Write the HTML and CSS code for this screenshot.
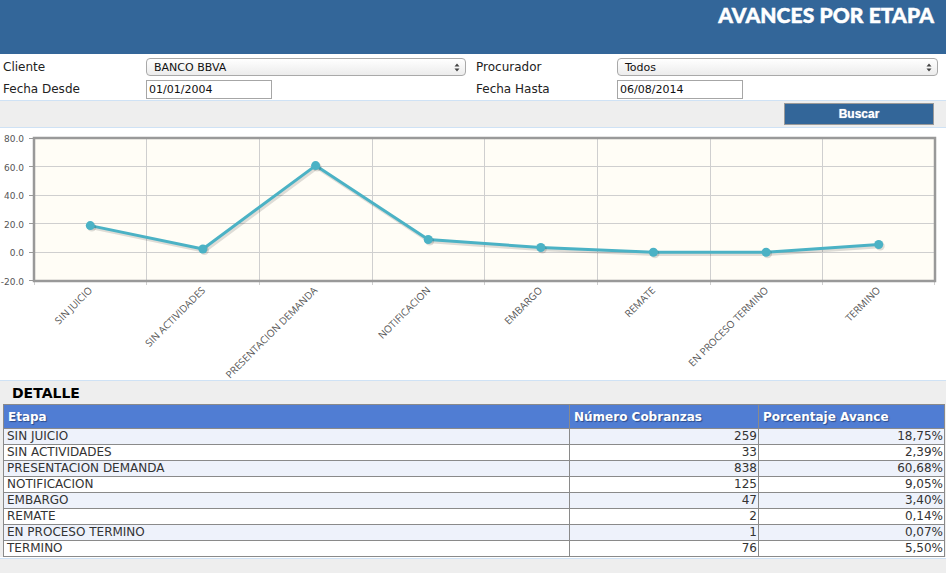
FILE: index.html
```html
<!DOCTYPE html>
<html lang="es">
<head>
<meta charset="utf-8">
<title>Avances por Etapa</title>
<link rel="stylesheet" href="styles.css">
</head>
<body>
<header class="topbar">
  <h1 class="title">AVANCES POR ETAPA</h1>
</header>

<form class="filters">
  <label class="lbl">Cliente</label>
  <div class="field"><div class="select"><span>BANCO BBVA</span><svg class="arrows" width="6" height="9" viewBox="0 0 6 9"><path d="M3 0.5 L5.5 3.5 L0.5 3.5 Z M3 8.5 L5.5 5.5 L0.5 5.5 Z" fill="#444"/></svg></div></div>
  <label class="lbl">Procurador</label>
  <div class="field"><div class="select wide"><span>Todos</span><svg class="arrows" width="6" height="9" viewBox="0 0 6 9"><path d="M3 0.5 L5.5 3.5 L0.5 3.5 Z M3 8.5 L5.5 5.5 L0.5 5.5 Z" fill="#444"/></svg></div></div>
  <label class="lbl">Fecha Desde</label>
  <div class="field"><input class="date" type="text" value="01/01/2004"></div>
  <label class="lbl">Fecha Hasta</label>
  <div class="field"><input class="date" type="text" value="06/08/2014"></div>
</form>

<div class="actions">
  <button class="btn" type="button">Buscar</button>
</div>

<section class="chart">
  <svg class="plot" width="946" height="252" viewBox="0 0 946 252">
    <rect x="34" y="10" width="901" height="143" fill="#fffdf6"/>
    <g stroke="#cfcfcf" stroke-width="1">
      <line x1="34" y1="38.5" x2="935" y2="38.5"/>
      <line x1="34" y1="67.5" x2="935" y2="67.5"/>
      <line x1="34" y1="95.5" x2="935" y2="95.5"/>
      <line x1="34" y1="124.5" x2="935" y2="124.5"/>
      <line x1="146.5" y1="10" x2="146.5" y2="157"/>
      <line x1="259.5" y1="10" x2="259.5" y2="157"/>
      <line x1="372.5" y1="10" x2="372.5" y2="157"/>
      <line x1="484.5" y1="10" x2="484.5" y2="157"/>
      <line x1="597.5" y1="10" x2="597.5" y2="157"/>
      <line x1="710.5" y1="10" x2="710.5" y2="157"/>
      <line x1="822.5" y1="10" x2="822.5" y2="157"/>
      <line x1="34.5" y1="153" x2="34.5" y2="157"/>
      <line x1="934.5" y1="153" x2="934.5" y2="157"/>
    </g>
    <g stroke="#999" stroke-width="1">
      <line x1="29" y1="10.5" x2="34" y2="10.5"/>
      <line x1="29" y1="38.5" x2="34" y2="38.5"/>
      <line x1="29" y1="67.5" x2="34" y2="67.5"/>
      <line x1="29" y1="95.5" x2="34" y2="95.5"/>
      <line x1="29" y1="124.5" x2="34" y2="124.5"/>
      <line x1="29" y1="152.5" x2="34" y2="152.5"/>
    </g>
    <rect x="34" y="10" width="901" height="143" fill="none" stroke="#999" stroke-width="2.5"/>
    <g class="ylab" text-anchor="end">
      <text x="24" y="14">80.0</text>
      <text x="24" y="42.5">60.0</text>
      <text x="24" y="71">40.0</text>
      <text x="24" y="99.5">20.0</text>
      <text x="24" y="128">0.0</text>
      <text x="24" y="156.5">-20.0</text>
    </g>
    <polyline points="91.8,99.6 204.4,123 317.1,39.6 429.7,113.5 542.3,121.5 654.9,126.2 767.6,126.3 880.2,118.5" fill="none" stroke="rgba(0,0,0,0.13)" stroke-width="3.5" stroke-linejoin="round"/>
    <polyline points="90.3,97.6 202.9,121 315.6,37.6 428.2,111.5 540.8,119.5 653.4,124.2 766.1,124.3 878.7,116.5" fill="none" stroke="#4bb2c5" stroke-width="3" stroke-linejoin="round"/>
    <g fill="rgba(0,0,0,0.13)">
      <circle cx="91.8" cy="99.1" r="4.5"/><circle cx="204.4" cy="122.5" r="4.5"/><circle cx="317.1" cy="39.1" r="4.5"/><circle cx="429.7" cy="113" r="4.5"/><circle cx="542.3" cy="121" r="4.5"/><circle cx="654.9" cy="125.7" r="4.5"/><circle cx="767.6" cy="125.8" r="4.5"/><circle cx="880.2" cy="118" r="4.5"/>
    </g>
    <g fill="#4bb2c5">
      <circle cx="90.3" cy="97.6" r="4.5"/><circle cx="202.9" cy="121" r="4.5"/><circle cx="315.6" cy="37.6" r="4.5"/><circle cx="428.2" cy="111.5" r="4.5"/><circle cx="540.8" cy="119.5" r="4.5"/><circle cx="653.4" cy="124.2" r="4.5"/><circle cx="766.1" cy="124.3" r="4.5"/><circle cx="878.7" cy="116.5" r="4.5"/>
    </g>
    <g class="xlab" text-anchor="end">
      <text transform="translate(93,163) rotate(-45)">SIN JUICIO</text>
      <text transform="translate(206,163) rotate(-45)">SIN ACTIVIDADES</text>
      <text transform="translate(318,163) rotate(-45)">PRESENTACION DEMANDA</text>
      <text transform="translate(431,163) rotate(-45)">NOTIFICACION</text>
      <text transform="translate(543,163) rotate(-45)">EMBARGO</text>
      <text transform="translate(656,163) rotate(-45)">REMATE</text>
      <text transform="translate(769,163) rotate(-45)">EN PROCESO TERMINO</text>
      <text transform="translate(881,163) rotate(-45)">TERMINO</text>
    </g>
  </svg>
</section>

<section class="detail">
  <h2 class="detail-title">DETALLE</h2>
  <table class="grid">
    <thead>
      <tr><th class="c1">Etapa</th><th class="c2">Número Cobranzas</th><th class="c3">Porcentaje Avance</th></tr>
    </thead>
    <tbody>
      <tr><td>SIN JUICIO</td><td class="num">259</td><td class="num">18,75%</td></tr>
      <tr><td>SIN ACTIVIDADES</td><td class="num">33</td><td class="num">2,39%</td></tr>
      <tr><td>PRESENTACION DEMANDA</td><td class="num">838</td><td class="num">60,68%</td></tr>
      <tr><td>NOTIFICACION</td><td class="num">125</td><td class="num">9,05%</td></tr>
      <tr><td>EMBARGO</td><td class="num">47</td><td class="num">3,40%</td></tr>
      <tr><td>REMATE</td><td class="num">2</td><td class="num">0,14%</td></tr>
      <tr><td>EN PROCESO TERMINO</td><td class="num">1</td><td class="num">0,07%</td></tr>
      <tr><td>TERMINO</td><td class="num">76</td><td class="num">5,50%</td></tr>
    </tbody>
  </table>
</section>

<div class="footer-bar"></div>
</body>
</html>
```

FILE: styles.css
```css
html, body {
  margin: 0;
  padding: 0;
  background: #ffffff;
}
body {
  width: 946px;
  height: 573px;
  overflow: hidden;
  font-family: "DejaVu Sans", Verdana, sans-serif;
  font-size: 12px;
  color: #222;
}

.topbar {
  height: 54px;
  background: #336699;
  display: flex;
  justify-content: flex-end;
  align-items: flex-start;
  padding-right: 12px;
}
.title {
  margin: 3px 0 0 0;
  font-family: "Lato", "Open Sans", sans-serif;
  font-weight: 900;
  font-size: 21px;
  letter-spacing: 0.1px;
  color: #ffffff;
  line-height: 24px;
  -webkit-text-stroke: 0.5px #ffffff;
}

.filters {
  display: grid;
  grid-template-columns: 143px 330px 141px 321px;
  grid-template-rows: 22px 22px;
  padding: 2px 0 0 3px;
  margin: 0;
  align-items: center;
}
.lbl {
  font-size: 12px;
  color: #222;
}
.field {
  display: flex;
  align-items: center;
}
.select {
  box-sizing: border-box;
  width: 320px;
  height: 18px;
  border: 1px solid #a9a9a9;
  border-radius: 4px;
  background: linear-gradient(#ffffff, #ececec);
  display: flex;
  align-items: center;
  justify-content: space-between;
  padding: 0 5px 0 7px;
  font-size: 11px;
  color: #111;
}
.select.wide {
  width: 321px;
}
.arrows {
  display: block;
}
.date {
  box-sizing: border-box;
  width: 126px;
  height: 19px;
  margin: 0;
  border: 1px solid #a6a6a6;
  padding: 0 0 0 2px;
  font-family: "DejaVu Sans", Verdana, sans-serif;
  font-size: 11px;
  color: #111;
  background: #fff;
}

.actions {
  box-sizing: border-box;
  height: 28px;
  background: #eeeeee;
  border-top: 1px solid #cfe2f5;
  border-bottom: 1px solid #cfe2f5;
  display: flex;
  justify-content: flex-end;
  align-items: center;
  padding-right: 12px;
}
.btn {
  width: 150px;
  height: 22px;
  background: #336699;
  border: 1px solid #9a9a9a;
  color: #fff;
  font-family: "Liberation Sans", Arial, sans-serif;
  font-weight: bold;
  font-size: 12px;
  text-shadow: 0 0 1px #ccd;
  padding: 0;
}

.chart {
  height: 252px;
  border-bottom: 1px solid #cfe2f5;
}
.plot {
  display: block;
}
.ylab text {
  font-family: "DejaVu Sans", sans-serif;
  font-size: 9px;
  fill: #555;
}
.xlab text {
  font-family: "Open Sans", sans-serif;
  font-size: 10px;
  fill: #555;
}

.detail {
  background: #eeeeee;
}
.detail-title {
  margin: 0;
  height: 23px;
  padding: 0 0 0 12px;
  font-family: "DejaVu Sans", Verdana, sans-serif;
  font-size: 14px;
  font-weight: bold;
  color: #000;
  line-height: 24px;
}
.grid {
  border-collapse: collapse;
  width: 942px;
  margin-left: 3px;
  background: #fff;
  border: 1.5px solid #8a8a8a;
}
.grid th {
  background: #507dd3;
  color: #fff;
  font-family: "DejaVu Sans", Verdana, sans-serif;
  font-size: 12px;
  font-weight: bold;
  text-align: left;
  height: 23px;
  padding: 0 4px;
  border: 1px solid #8a8a8a;
  text-shadow: 1px 1px 1px #2a4a8a;
}
.grid th.c1 { width: 557px; }
.grid th.c2 { width: 180px; }
.grid td {
  height: 15px;
  padding: 0 0 0 3px;
  border: 1px solid #8a8a8a;
  font-size: 12px;
  line-height: 15px;
  color: #333;
}
.grid tbody tr:nth-child(odd) td {
  background: #eef2fb;
}
.grid td.num {
  text-align: right;
  padding: 0 1px 0 0;
}

.footer-bar {
  height: 16px;
  margin-top: 1px;
  background: #eeeeee;
  border-top: 1px solid #cfe2f5;
}
```
